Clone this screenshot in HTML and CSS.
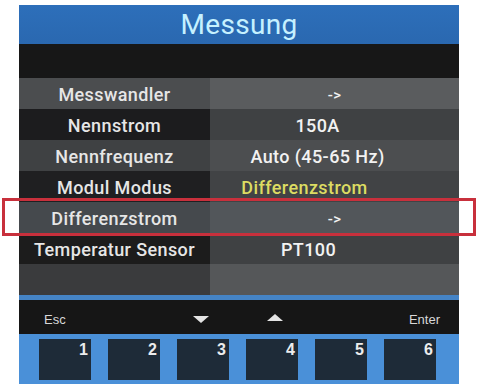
FILE: index.html
```html
<!DOCTYPE html>
<html>
<head>
<meta charset="utf-8">
<link rel="stylesheet" href="styles.css">
</head>
<body>
<div class="screen">
  <div class="title">Messung</div>
  <div class="band"></div>
  <div class="table">
    <div class="row r1"><div class="lab">Messwandler</div><div class="val v-arrow">-&gt;</div></div>
    <div class="row r2"><div class="lab">Nennstrom</div><div class="val">150A</div></div>
    <div class="row r3"><div class="lab">Nennfrequenz</div><div class="val">Auto (45-65 Hz)</div></div>
    <div class="row r4"><div class="lab">Modul Modus</div><div class="val yellow">Differenzstrom</div></div>
    <div class="row r5"><div class="lab">Differenzstrom</div><div class="val v-arrow">-&gt;</div></div>
    <div class="row r6"><div class="lab">Temperatur Sensor</div><div class="val v-pt">PT100</div></div>
    <div class="row r7"><div class="lab"></div><div class="val"></div></div>
  </div>
  <div class="sep"></div>
  <div class="keys">
    <span class="key-esc">Esc</span>
    <span class="tri down"></span>
    <span class="tri up"></span>
    <span class="key-enter">Enter</span>
  </div>
  <div class="buttons">
    <div class="btn">1</div>
    <div class="btn">2</div>
    <div class="btn">3</div>
    <div class="btn">4</div>
    <div class="btn">5</div>
    <div class="btn">6</div>
  </div>
</div>
<div class="highlight"></div>
</body>
</html>
```
FILE: styles.css
```css
html, body {
  margin: 0;
  padding: 0;
  background: #ffffff;
}
body {
  position: relative;
  width: 479px;
  height: 384px;
  overflow: hidden;
  font-family: Roboto, "Liberation Sans", sans-serif;
}
.screen {
  margin: 5px 0 0 19px;
  width: 440px;
  height: 379px;
  display: flex;
  flex-direction: column;
  background: #161616;
}
.title {
  height: 39px;
  background: linear-gradient(#2d6fba, #2a68b0);
  color: #c6f1ff;
  font-size: 28px;
  line-height: 40px;
  text-align: center;
  letter-spacing: 0.3px;
}
.band {
  height: 34px;
  background: #171717;
}
.table {
  display: flex;
  flex-direction: column;
}
.row {
  display: grid;
  grid-template-columns: 191px 249px;
  height: 31px;
  line-height: 34px;
  font-size: 18px;
  font-weight: 500;
  letter-spacing: 0.4px;
}
.lab {
  text-align: center;
  color: #e6e6e6;
}
.val {
  text-align: center;
  color: #f2f2f2;
  padding-right: 34px;
}
.val.v-arrow { padding-right: 0; font-size: 15px; }
.val.v-pt { padding-right: 52px; }
.yellow {
  color: #dcdc62;
  padding-right: 60px;
}
.r1 .lab { background: #4b4d4f; } .r1 .val { background: #5a5c5e; }
.r2 .lab { background: #1c1c1e; } .r2 .val { background: #3f4143; }
.r3 .lab { background: #3f4143; } .r3 .val { background: #4c4e50; }
.r4 .lab { background: #1f1f21; } .r4 .val { background: #414345; }
.r5 .lab { background: #45494d; } .r5 .val { background: #52565a; }
.r6 .lab { background: #1c1c1c; } .r6 .val { background: #3f4143; }
.r7 .lab { background: #3a3b3d; } .r7 .val { background: #555759; }
.sep {
  height: 5px;
  background: #4584c6;
}
.keys {
  height: 34px;
  background: #161616;
  display: flex;
  align-items: center;
  color: #d8d8d8;
  font-size: 13px;
  font-family: "Liberation Sans", Arial, sans-serif;
  padding: 4px 19px 0 25px;
  box-sizing: border-box;
}
.key-esc { margin-right: 127px; }
.tri {
  width: 0;
  height: 0;
  border-left: 8px solid transparent;
  border-right: 8px solid transparent;
}
.tri.down { border-top: 7px solid #e4e4e4; margin-top: 1px; }
.tri.up { border-bottom: 7px solid #e4e4e4; margin-left: 58px; margin-top: -4px; }
.key-enter { margin-left: auto; }
.buttons {
  flex: 1;
  background: #4a90d8;
  display: flex;
  gap: 17px;
  padding: 5px 21px 4px 20px;
}
.btn {
  width: 52px;
  height: 41px;
  background: #1e2b38;
  color: #ececec;
  font-size: 16px;
  font-weight: 700;
  text-align: right;
  padding: 2px 3px 0 0;
  box-sizing: border-box;
  font-family: "Liberation Sans", Arial, sans-serif;
}
.highlight {
  position: absolute;
  left: 2px;
  top: 198px;
  width: 474px;
  height: 38px;
  box-sizing: border-box;
  border: 3px solid #c8303c;
}
```
